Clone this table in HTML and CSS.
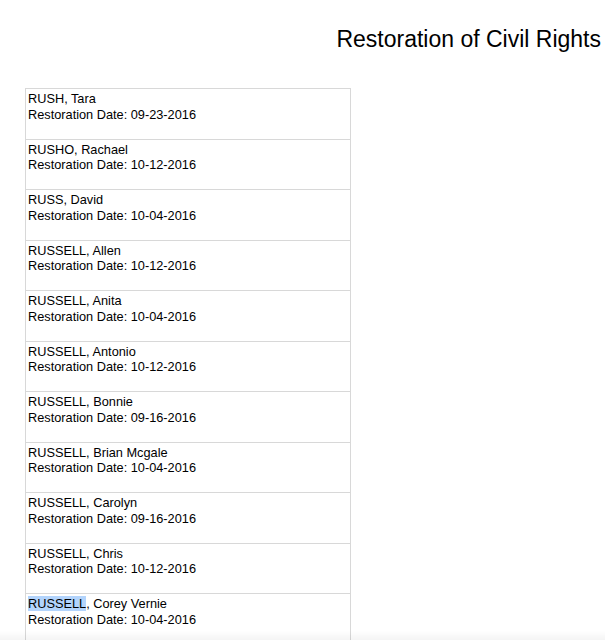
FILE: index.html
```html
<!DOCTYPE html>
<html>
<head>
<meta charset="utf-8">
<link rel="stylesheet" href="styles.css">
</head>
<body>
<div class="page">
  <h1 class="title">Restoration of Civil Rights</h1>
  <div class="list">
    <div class="row"><div class="name">RUSH, Tara</div><div class="date">Restoration Date: 09-23-2016</div></div>
    <div class="row"><div class="name">RUSHO, Rachael</div><div class="date">Restoration Date: 10-12-2016</div></div>
    <div class="row"><div class="name">RUSS, David</div><div class="date">Restoration Date: 10-04-2016</div></div>
    <div class="row"><div class="name">RUSSELL, Allen</div><div class="date">Restoration Date: 10-12-2016</div></div>
    <div class="row"><div class="name">RUSSELL, Anita</div><div class="date">Restoration Date: 10-04-2016</div></div>
    <div class="row"><div class="name">RUSSELL, Antonio</div><div class="date">Restoration Date: 10-12-2016</div></div>
    <div class="row"><div class="name">RUSSELL, Bonnie</div><div class="date">Restoration Date: 09-16-2016</div></div>
    <div class="row"><div class="name">RUSSELL, Brian Mcgale</div><div class="date">Restoration Date: 10-04-2016</div></div>
    <div class="row"><div class="name">RUSSELL, Carolyn</div><div class="date">Restoration Date: 09-16-2016</div></div>
    <div class="row"><div class="name">RUSSELL, Chris</div><div class="date">Restoration Date: 10-12-2016</div></div>
    <div class="row"><div class="name"><span class="hl">RUSSELL</span>, Corey Vernie</div><div class="date">Restoration Date: 10-04-2016</div></div>
  </div>
</div>
<div class="fade"></div>
</body>
</html>
```
FILE: styles.css
```css
html, body {
  margin: 0;
  padding: 0;
  background: #ffffff;
}
body {
  font-family: "Liberation Sans", Arial, sans-serif;
  color: #000;
  overflow: hidden;
  height: 640px;
}
.page {
  display: flex;
  flex-direction: column;
  padding-top: 26px;
}
.title {
  margin: 0;
  font-weight: normal;
  font-size: 23px;
  line-height: 26px;
  text-align: right;
  padding-right: 4px;
}
.list {
  margin: 36px 0 0 25px;
  width: 324px;
  border-top: 1px solid #d8d8d8;
  border-left: 1px solid #d8d8d8;
  border-right: 1px solid #d8d8d8;
  display: flex;
  flex-direction: column;
}
.row {
  height: 47.5px;
  border-bottom: 1px solid #d8d8d8;
  padding: 2px 0 0 2px;
  box-sizing: content-box;
  font-size: 12.75px;
  line-height: 15.5px;
}
.hl {
  background: #b3d4fc;
}
.fade {
  position: fixed;
  left: 0;
  right: 0;
  bottom: 0;
  height: 9px;
  background: linear-gradient(to bottom, rgba(0,0,0,0), rgba(0,0,0,0.045));
  pointer-events: none;
}
```
